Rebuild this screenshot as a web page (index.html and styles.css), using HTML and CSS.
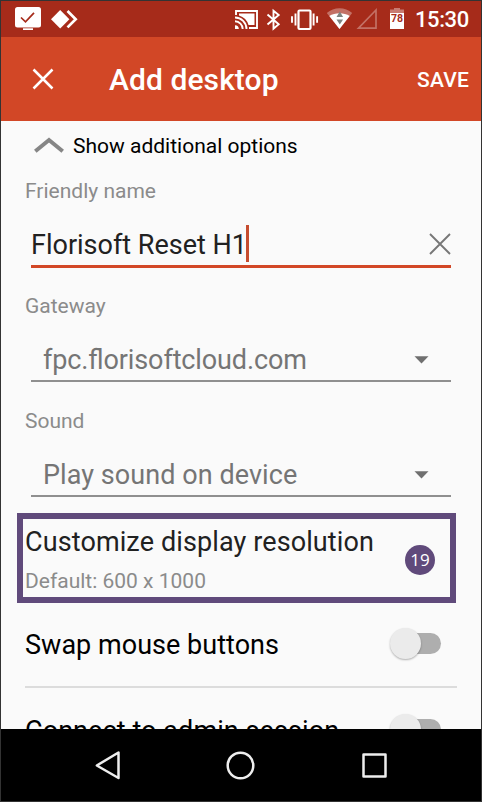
FILE: index.html
```html
<!DOCTYPE html>
<html lang="en">
<head>
<meta charset="utf-8">
<title>Add desktop</title>
<link rel="stylesheet" href="styles.css">
</head>
<body>
<div class="phone">
  <div class="status">
    <svg class="status-left" width="64" height="24" viewBox="14 6 64 24">
      <rect x="15" y="7" width="26" height="20.500" rx="2.500" fill="#fff"/>
      <path d="M21 17.500l4.500 4.300 8.500-9" fill="none" stroke="#a62b1a" stroke-width="1.700"/>
      <path d="M23 29.300h10" stroke="#fff" stroke-width="2"/>
      <path d="M60.200 10l9.200 9.200-9.200 9.200-9.200-9.200z" fill="#fff"/>
      <path d="M67.500 11l8.200 8.200-8.200 8.200" fill="none" stroke="#fff" stroke-width="2.700"/>
    </svg>
    <svg class="status-right" width="172" height="26" viewBox="234 6 172 26">
      <g fill="none" stroke="#fff" stroke-width="1.900">
        <path d="M236 15v-4h21v17h-8"/>
        <path d="M235 17.500a11.500 11.500 0 0 1 11.500 11.500M235 21.300a7.700 7.700 0 0 1 7.700 7.700"/>
      </g>
      <path d="M239 13.500h15.500v11.500h-6a14 14 0 0 0-9.500-9.500z" fill="#fff"/>
      <path d="M235 25.200a3.800 3.800 0 0 1 3.800 3.800H235z" fill="#fff"/>
      <path d="M267.500 14.500l11.200 9.700-5.200 4.500v-18l5.200 4.300-11.200 9.500" fill="none" stroke="#fff" stroke-width="1.900"/>
      <rect x="298.500" y="10.500" width="12" height="18.500" rx="1" fill="none" stroke="#fff" stroke-width="2.200"/>
      <path d="M295.500 13.500v12M313.600 13.500v12M292 16.300v6.500M317.100 16.300v6.500" stroke="#fff" stroke-width="1.900"/>
      <path d="M326.800 13c7-6.500 18.400-6.500 25.400 0l-12.700 16z" fill="#fff" opacity=".33"/>
      <path d="M329.300 16c5.500-3.600 14.900-3.600 20.400 0l-10.200 13z" fill="#fff"/>
      <path d="M336.500 17l3.300-5.500 3.300 5.500zM336.500 19.500h6.600l-3.300 5z" fill="#7d8582"/>
      <path d="M358.500 28.200h17.500v-18.200z" fill="none" stroke="#fff" stroke-width="1.700" opacity=".33"/>
      <path d="M394 8h6v1.500h4v4h-14v-4h4z" fill="#fff" opacity=".38"/>
      <path d="M390 13h14v16h-14z" fill="#fff"/>
      <text class="charge" x="397" y="22">78</text>
    </svg>
    <span class="clock">15:30</span>
  </div>
  <header class="appbar">
    <svg class="close" width="22" height="22" viewBox="0 0 22 22"><path d="M1.500 1.500l19 19M20.500 1.500l-19 19" fill="none" stroke="#fff" stroke-width="2.500"/></svg>
    <h1 class="title">Add desktop</h1>
    <span class="save">SAVE</span>
  </header>
  <main class="content">
    <div class="expander">
      <svg class="chevron" width="30" height="16" viewBox="0 0 30 16"><path d="M1.300 14.300L15 3l13.700 11.300" fill="none" stroke="#868686" stroke-width="4"/></svg>
      <span>Show additional options</span>
    </div>
    <div class="label">Friendly name</div>
    <div class="field active">
      <span>Florisoft Reset H1</span><i class="caret"></i>
      <svg class="clear" width="22" height="22" viewBox="0 0 22 22"><path d="M1 1l20 20M21 1L1 21" fill="none" stroke="#777" stroke-width="1.900"/></svg>
    </div>
    <div class="label gateway">Gateway</div>
    <div class="field select">
      <span class="t-gateway">fpc.florisoftcloud.com</span>
      <svg class="arrow" width="15" height="8" viewBox="0 0 15 8"><path d="M.5 .3h14L7.500 7.500z" fill="#6f6f6f"/></svg>
    </div>
    <div class="label sound">Sound</div>
    <div class="field select">
      <span class="t-play">Play sound on device</span>
      <svg class="arrow" width="15" height="8" viewBox="0 0 15 8"><path d="M.5 .3h14L7.500 7.500z" fill="#6f6f6f"/></svg>
    </div>
    <section class="resolution">
      <div>
        <div class="res-title">Customize display resolution</div>
        <div class="res-sub">Default: 600 x 1000</div>
      </div>
      <span class="badge">19</span>
    </section>
    <div class="row swap">
      <span class="t-swap">Swap mouse buttons</span>
      <span class="switch"><i class="thumb"></i></span>
    </div>
    <div class="row">
      <span class="t-connect">Connect to admin session</span>
      <span class="switch"><i class="thumb"></i></span>
    </div>
  </main>
  <nav class="navbar">
    <svg width="480" height="72" viewBox="1 729 480 72" fill="none" stroke="#eee" stroke-width="2.500" stroke-linejoin="round">
      <path d="M118.500 752.500v25.500L96.800 765.500z"/>
      <circle cx="240.500" cy="765.500" r="12.800"/>
      <path d="M363.500 754.500h22v22h-22z"/>
    </svg>
  </nav>
</div>
</body>
</html>
```
FILE: styles.css
```css
* { box-sizing: border-box; }
body { margin: 0; font-family: Roboto, sans-serif; }
svg { display: block; flex: none; }
.phone {
  width: 482px; height: 802px; border: 1px solid #333;
  display: flex; flex-direction: column; background: #fafafa; overflow: hidden;
}
.status {
  height: 36px; flex: none; background: #a62b1a; color: #fff;
  display: flex; align-items: flex-start; padding: 5px 12px 0 13px;
}
.status-right { margin-left: 156px; }
.charge { font: 700 10.5px Roboto, sans-serif; fill: #a62b1a; text-anchor: middle; }
.clock { margin-left: 9px; font-size: 22px; font-weight: 500; line-height: 28px; letter-spacing: -.4px; white-space: nowrap; }
.appbar {
  height: 84px; flex: none; background: #d24726; color: #fff;
  display: flex; align-items: center; padding: 0 12px 0 31px;
}
.title { margin: 0 0 0 55px; padding-top: 2px; font-size: 30px; font-weight: 500; line-height: 40px; letter-spacing: .08px; }
.save { margin-left: auto; padding-top: 2px; font-size: 21px; font-weight: 500; line-height: 30px; letter-spacing: .2px; }
.content { height: 608px; flex: none; overflow: hidden; white-space: nowrap; }
.expander { height: 50px; display: flex; align-items: center; gap: 9px; padding-left: 33px; font-size: 21px; color: #000; }
.chevron { margin-top: -2px; }
.label { height: 40px; line-height: 40px; padding-left: 24px; font-size: 21px; color: #8b8b8b; }
.gateway { margin-top: 18px; }
.sound { margin-top: 19px; }
.field { margin: 0 30px; height: 57px; padding-top: 14px; display: flex; align-items: center; font-size: 27px; line-height: 40px; }
.active { border-bottom: 3px solid #d24726; color: #212121; }
.caret { width: 3px; height: 37px; margin: -3px 0 0 -1px; background: #c64d30; }
.clear { margin-left: auto; margin-top: -3px; }
.select { height: 56px; padding-left: 12px; border-bottom: 2px solid #8f8f8f; color: #757575; }
.t-gateway { letter-spacing: -.12px; font-feature-settings: "liga" 1; }
.t-play { letter-spacing: .06px; }
.arrow { margin-left: auto; margin-right: 22px; }
.resolution {
  margin: 16px 25px 0 16px; height: 90px; border: 6px solid #604a7b;
  padding: 2px 15px 0 2px; display: flex; align-items: flex-start; justify-content: space-between;
}
.res-title { font-size: 27px; line-height: 42px; letter-spacing: .11px; color: #212121; }
.res-sub { font-size: 21px; line-height: 36px; color: #8b8b8b; }
.badge {
  width: 30px; height: 30px; margin-top: 24px; border-radius: 50%; background: #604a7b;
  color: #fff; font: 17px/30px "Open Sans", sans-serif; text-align: center;
}
.row {
  margin: 0 24px; height: 86px; display: flex; align-items: center; justify-content: space-between;
  border-bottom: 2px solid #dcdcdc; padding-right: 16px; font-size: 27px; color: #000;
}
.swap { height: 85px; }
.t-swap { padding-top: 1px; letter-spacing: .03px; }
.t-connect { padding-top: 2px; letter-spacing: .08px; }
.switch { width: 40px; height: 21px; margin-top: -2px; border-radius: 11px; background: #aeaeae; position: relative; }
.thumb {
  position: absolute; left: -11px; top: -5px; width: 31px; height: 31px; border-radius: 50%;
  background: #ebebeb; box-shadow: 0 1px 2px rgba(0,0,0,.3);
}
.navbar { height: 72px; flex: none; background: #000; }
```
